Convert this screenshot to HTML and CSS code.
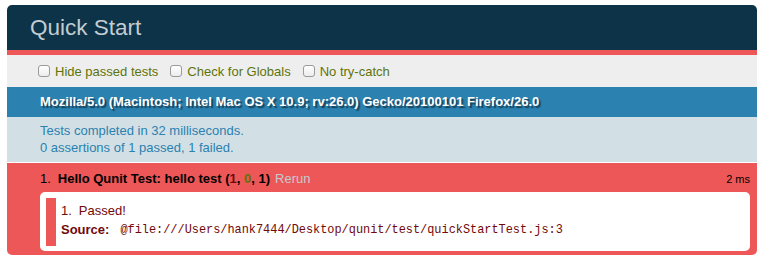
FILE: index.html
```html
<!DOCTYPE html>
<html lang="en">
<head>
  <meta charset="UTF-8">
  <title>Quick Start</title>
  <link rel="stylesheet" href="styles.css">
</head>
<body>
  <div class="qunit">
    <h1 class="qunit-header">Quick Start</h1>
    <div class="qunit-banner"></div>
    <div class="toolbar">
      <label class="toggle"><input type="checkbox">Hide passed tests</label>
      <label class="toggle"><input type="checkbox">Check for Globals</label>
      <label class="toggle"><input type="checkbox">No try-catch</label>
    </div>
    <div class="user-agent">Mozilla/5.0 (Macintosh; Intel Mac OS X 10.9; rv:26.0) Gecko/20100101 Firefox/26.0</div>
    <p class="test-result">Tests completed in 32 milliseconds.<br>0 assertions of 1 passed, 1 failed.</p>
    <ol class="tests">
      <li class="test fail">
        <div class="test-head">
          <span class="num">1.</span>
          <strong>Hello Qunit Test: hello test <b class="counts">(<b class="failed">1</b>, <b class="passed">0</b>, 1)</b></strong>
          <a class="rerun" href="#">Rerun</a>
          <span class="runtime">2 ms</span>
        </div>
        <ol class="asserts">
          <li class="assert fail">
            <div class="assert-line"><span class="num">1.</span>Passed!</div>
            <table class="source">
              <tr><th>Source:</th><td><pre>@file:///Users/hank7444/Desktop/qunit/test/quickStartTest.js:3</pre></td></tr>
            </table>
          </li>
        </ol>
      </li>
    </ol>
  </div>
</body>
</html>
```

FILE: styles.css
```css
body {
  margin: 0;
  font-family: "Liberation Sans", Arial, sans-serif;
  font-size: 13px;
  background-color: #fff;
}
.qunit {
  margin: 5px 3px 0 7px;
}
.qunit-header {
  margin: 0;
  padding-left: 23px;
  height: 45px;
  line-height: 45px;
  font-size: 22.5px;
  font-weight: normal;
  color: #c2ccd1;
  background-color: #0d3349;
  border-radius: 5px 5px 0 0;
}
.qunit-banner {
  height: 5px;
  background-color: #ee5757;
}
.toolbar {
  display: flex;
  align-items: center;
  height: 32px;
  padding-left: 31px;
  color: #5e740b;
  background-color: #eee;
}
.toggle {
  display: flex;
  align-items: center;
  margin-right: 12px;
}
.toggle input {
  appearance: none;
  -webkit-appearance: none;
  width: 12px;
  height: 12px;
  margin: 0 5px 0 0;
  border: 1px solid #9a9a9a;
  border-radius: 3px;
  background: linear-gradient(#fff, #ececec);
}
.user-agent {
  height: 30px;
  line-height: 30px;
  padding-left: 33px;
  font-weight: bold;
  color: #fff;
  background-color: #2b81af;
  text-shadow: rgba(0, 0, 0, 0.5) 2px 2px 1px;
}
.test-result {
  margin: 0;
  padding: 6px 0 6px 33px;
  line-height: 16.5px;
  color: #2b81af;
  background-color: #d2e0e6;
  border-bottom: 1px solid #fff;
}
.tests {
  margin: 0;
  padding: 0;
  list-style: none;
}
.test {
  padding: 8px 7px 4px 33px;
}
.test.fail {
  color: #000;
  background-color: #ee5757;
  border-radius: 0 0 5px 5px;
}
.test-head {
  display: flex;
  align-items: baseline;
  line-height: 16px;
}
.num {
  margin-right: 7px;
}
.counts .failed {
  color: #710909;
}
.counts .passed {
  color: #5e740b;
}
.rerun {
  margin-left: 5px;
  color: #c2ccd1;
  text-decoration: none;
}
.runtime {
  margin-left: auto;
  font-size: 11px;
}
.asserts {
  margin: 5px 0 0;
  padding: 6px 0 5px 6px;
  list-style: none;
  background-color: #fff;
  border-radius: 5px;
}
.assert.fail {
  padding: 4.5px 5px 8px;
  color: #710909;
  background-color: #fff;
  border-left: 10px solid #ee5757;
}
.assert-line {
  line-height: 16px;
}
.assert-line .num {
  margin-right: 7px;
}
.source {
  border-collapse: collapse;
  margin-top: 3px;
}
.source th {
  padding: 0 11px 0 0;
  text-align: left;
  line-height: 16px;
}
.source td {
  padding: 0;
}
.source pre {
  margin: 0;
  font-family: "Liberation Mono", "Courier New", monospace;
  font-size: 11.9px;
  line-height: 16px;
}
```
